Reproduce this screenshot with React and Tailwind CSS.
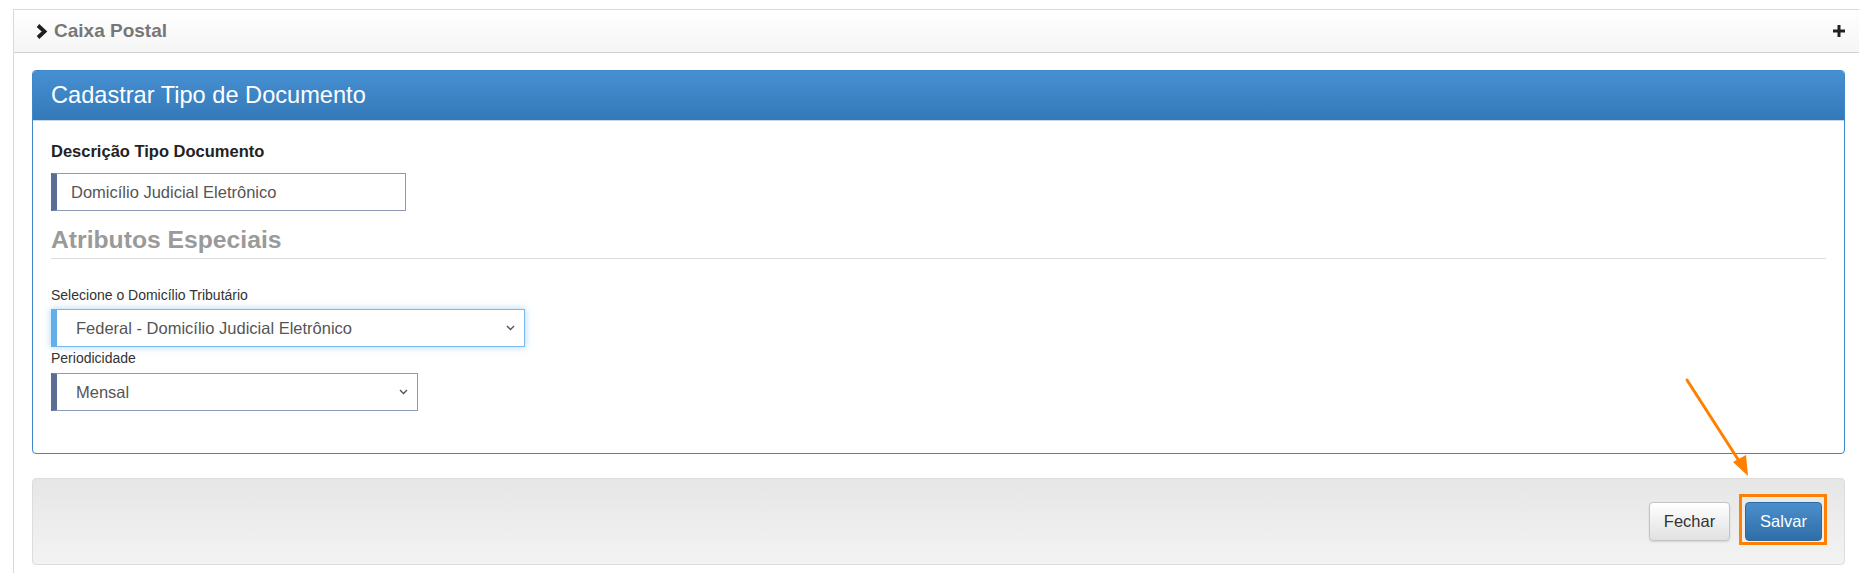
import React from 'react';

const font = { fontFamily: '"Liberation Sans", Arial, sans-serif' };

function Chevron() {
  return (
    <svg width="13" height="15" viewBox="0 0 13 15" className="mr-[6px]">
      <polyline points="3,1.5 9.5,7.5 3,13.5" fill="none" stroke="#1f1f1f" strokeWidth="3.8" strokeLinejoin="miter" />
    </svg>
  );
}

function Plus() {
  return (
    <svg width="12" height="12" viewBox="0 0 12 12">
      <rect x="0" y="4.5" width="12" height="3" fill="#222" />
      <rect x="4.5" y="0" width="3" height="12" fill="#222" />
    </svg>
  );
}

function SelectArrow() {
  return (
    <svg width="9" height="6" viewBox="0 0 9 6">
      <polyline points="1,1 4.5,4.5 8,1" fill="none" stroke="#555" strokeWidth="1.4" />
    </svg>
  );
}

function Select({ value, width, focused }) {
  return (
    <div
      className={`flex items-center h-[38px] bg-white border border-l-[6px] pl-[19px] pr-[9px] justify-between ${
        focused
          ? 'border-[#7ab8ec] border-l-[#64aee8] shadow-[0_0_7px_rgba(102,175,233,0.55)]'
          : 'border-[#8b9ab8] border-l-[#5a6d94]'
      } ${width}`}
    >
      <span className="text-[16.5px] text-[#555]">{value}</span>
      <SelectArrow />
    </div>
  );
}

export default function App() {
  return (
    <div className="relative w-[1859px] h-[573px] overflow-hidden bg-white pt-[9px] pl-[13px]" style={font}>
      <div className="border-l border-t border-[#d9d9d9] h-full">
        <div className="h-[43px] flex items-center justify-between pl-[21px] pr-[14px] border-b border-[#cfcfcf] bg-gradient-to-b from-white to-[#f5f5f5]">
          <div className="flex items-center">
            <Chevron />
            <span className="text-[19px] font-bold text-[#777]">Caixa Postal</span>
          </div>
          <Plus />
        </div>

        <div className="pl-[18px] pr-[14px] pt-[17px]">
          <div className="border border-[#3f87cb] rounded-[4px] overflow-hidden">
            <div className="h-[49px] flex items-center pl-[18px] bg-gradient-to-b from-[#4690d1] to-[#3479b9]">
              <span className="text-[23.6px] text-white">Cadastrar Tipo de Documento</span>
            </div>
            <div className="px-[18px] pt-[18px] pb-[42px] border-t border-[#c9d6e6]">
              <div className="text-[16.5px] font-bold text-[#222] leading-[24px]">Descrição Tipo Documento</div>
              <div className="mt-[10px] w-[355px] h-[38px] flex items-center border border-[#8b9ab8] border-l-[6px] border-l-[#5a6d94] pl-[14px]">
                <span className="text-[16.5px] text-[#555]">Domicílio Judicial Eletrônico</span>
              </div>
              <div className="mt-[14px] text-[24.7px] font-bold text-[#9a9a9a] leading-[29px]">Atributos Especiais</div>
              <div className="mt-[4px] border-t border-[#dcdcdc]" />
              <div className="mt-[26px] text-[14px] text-[#333] leading-[20px]">Selecione o Domicílio Tributário</div>
              <div className="mt-[4px]">
                <Select value="Federal - Domicílio Judicial Eletrônico" width="w-[474px]" focused />
              </div>
              <div className="mt-[1px] text-[14px] text-[#333] leading-[20px]">Periodicidade</div>
              <div className="mt-[5px]">
                <Select value="Mensal" width="w-[367px]" />
              </div>
            </div>
          </div>

          <div className="mt-[24px] h-[87px] flex items-center justify-end gap-[15px] pr-[22px] border border-[#dcdcdc] rounded-[4px] bg-gradient-to-b from-[#e6e6e6] to-[#f3f3f3]">
            <button className="w-[81px] h-[39px] rounded-[4px] border border-[#c4c4c4] bg-gradient-to-b from-white to-[#e1e1e1] text-[16.5px] text-[#333] shadow-[0_1px_2px_rgba(0,0,0,0.12)]">
              Fechar
            </button>
            <div className="relative">
              <button className="w-[77px] h-[39px] rounded-[4px] border border-[#2c6aa3] bg-gradient-to-b from-[#4a8fcd] to-[#2f6ea8] text-[16.5px] text-white">
                Salvar
              </button>
              <div className="absolute -left-[6px] -top-[8px] w-[88px] h-[51px] border-[3px] border-[#ff7f00]" />
            </div>
          </div>
        </div>
      </div>

      <svg className="absolute left-0 top-0 pointer-events-none" width="1859" height="573">
        <line x1="1687" y1="380" x2="1741" y2="464" stroke="#ff7f00" strokeWidth="3" strokeLinecap="round" />
        <polygon points="1748,476 1733,462 1746,455" fill="#ff7f00" />
      </svg>
    </div>
  );
}
